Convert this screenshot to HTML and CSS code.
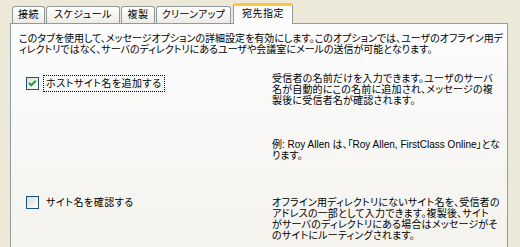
FILE: index.html
```html
<!DOCTYPE html>
<html lang="ja">
<head>
<meta charset="utf-8">
<link rel="stylesheet" href="styles.css">
</head>
<body>
<div class="window">
  <div class="tabs">
    <div class="tab t1">接続</div>
    <div class="tab t2">スケジュール</div>
    <div class="tab t3">複製</div>
    <div class="tab t4">クリーンアップ</div>
    <div class="tab active">宛先指定</div>
  </div>
  <div class="panel">
    <p class="intro">このタブを使用して、メッセージオプションの詳細設定を有効にします。このオプションでは、ユーザのオフライン用デ<br>ィレクトリではなく、サーバのディレクトリにあるユーザや会議室にメールの送信が可能となります。</p>
    <div class="option first">
      <div class="check">
        <span class="box"><svg width="11" height="11" viewBox="0 0 11 11"><path d="M2 5 L4.3 7.3 L8.8 2.8" fill="none" stroke="#21a121" stroke-width="2"/></svg></span>
        <span class="label focus">ホストサイト名を追加する</span>
      </div>
      <div class="desc">
        <p>受信者の名前だけを入力できます。ユーザのサーバ<br>名が自動的にこの名前に追加され、メッセージの複<br>製後に受信者名が確認されます。</p>
        <p class="example">例: Roy Allen は、「Roy Allen, FirstClass Online」とな<br>ります。</p>
      </div>
    </div>
    <div class="option second">
      <div class="check">
        <span class="box"></span>
        <span class="label">サイト名を確認する</span>
      </div>
      <div class="desc">
        <p>オフライン用ディレクトリにないサイト名を、受信者の<br>アドレスの一部として入力できます。複製後、サイト<br>がサーバのディレクトリにある場合はメッセージがそ<br>のサイトにルーティングされます。</p>
      </div>
    </div>
  </div>
</div>
</body>
</html>
```

FILE: styles.css
```css
html, body {
  margin: 0;
  padding: 0;
}
body {
  background: #ece9d8;
  font-family: "Liberation Sans", "Noto Sans CJK JP", sans-serif;
  font-size: 10px;
  font-feature-settings: "palt";
  color: #000;
  width: 520px;
  height: 247px;
  overflow: hidden;
}
p { margin: 0; }
.window {
  padding-top: 3px;
}
.tabs {
  display: flex;
  align-items: flex-end;
  gap: 1px;
  padding-left: 12px;
  height: 20px;
  position: relative;
  z-index: 1;
}
.tab {
  height: 17px;
  box-sizing: border-box;
  border: 1px solid #919b9c;
  border-bottom: none;
  border-radius: 3px 3px 0 0;
  background: linear-gradient(#ffffff, #ecebe6);
  line-height: 16px;
  white-space: nowrap;
  letter-spacing: 0.5px;
  text-align: center;
}
.t1 { width: 33px; }
.t2 { width: 74px; }
.t3 { width: 34px; }
.t4 { width: 75px; letter-spacing: 0.2px; }
.tab.active {
  width: 60px;
  height: 21px;
  margin-bottom: -1px;
  margin-left: 1px;
  background: #fcfcfe;
  border-top: 3px solid #ffc83c;
  border-radius: 3px 3px 0 0;
  line-height: 16px;
}
.panel {
  margin-left: 10px;
  width: 498px;
  height: 225px;
  box-sizing: border-box;
  border: 1px solid #919b9c;
  background: linear-gradient(#fcfcfe, #f4f3ee);
  padding: 9px 8px 0;
}
.intro, .desc p {
  line-height: 11px;
  white-space: nowrap;
}
.desc p {
  letter-spacing: 0.2px;
}
.example {
  letter-spacing: 0;
}
.option {
  display: grid;
  grid-template-columns: 246px 1fr;
  margin-left: 7px;
}
.option.first { margin-top: 18px; }
.option.second { margin-top: 36px; }
.check {
  display: flex;
  align-items: center;
  gap: 4px;
  padding-top: 2px;
  align-self: start;
}
.second .check {
  padding-top: 0;
  margin-top: -3px;
}
.box {
  width: 13px;
  height: 13px;
  box-sizing: border-box;
  border: 1px solid #1c5180;
  background: linear-gradient(135deg, #dcdcd7, #ffffff);
  display: flex;
  align-items: center;
  justify-content: center;
}
.label {
  white-space: nowrap;
  padding: 1px 2px;
  line-height: 13px;
  border: 1px solid transparent;
  letter-spacing: 0.5px;
}
.label.focus {
  border: 1px dotted #000;
}
.desc .example {
  margin-top: 33px;
  letter-spacing: 0;
}
```
